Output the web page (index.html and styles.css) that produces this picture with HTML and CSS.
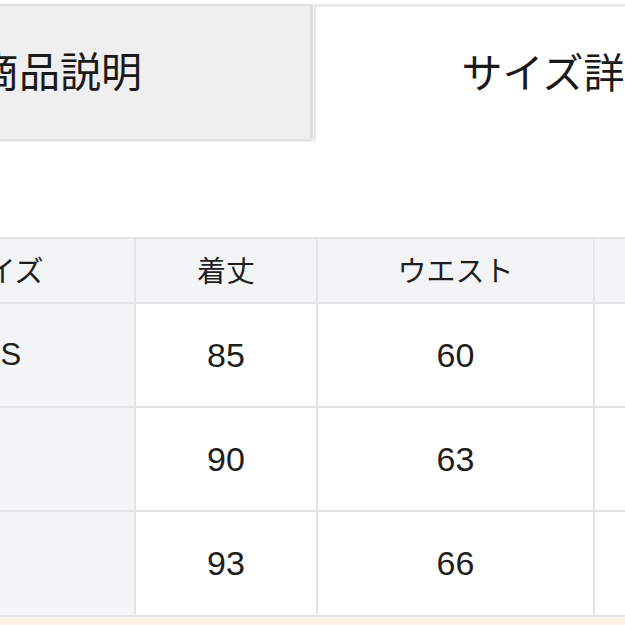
FILE: index.html
```html
<!DOCTYPE html>
<html lang="ja">
<head>
<meta charset="utf-8">
<title>サイズ詳細</title>
<link rel="stylesheet" href="styles.css">
</head>
<body>
<div class="page">
  <div class="tabs">
    <div class="tab tab-inactive">商品説明</div>
    <div class="tab tab-active">サイズ詳細</div>
  </div>
  <table class="size-table">
    <colgroup>
      <col class="c1"><col class="c2"><col class="c3"><col class="c4"><col class="c5">
    </colgroup>
    <thead>
      <tr class="head-row">
        <th>サイズ</th><th>着丈</th><th>ウエスト</th><th>ヒップ</th><th>裾幅</th>
      </tr>
    </thead>
    <tbody>
      <tr class="r1"><th class="label">XS</th><td>85</td><td>60</td><td>88</td><td>70</td></tr>
      <tr class="r2"><th class="label"></th><td>90</td><td>63</td><td>92</td><td>72</td></tr>
      <tr class="r3"><th class="label"></th><td>93</td><td>66</td><td>96</td><td>74</td></tr>
      <tr class="note-row"><td colspan="5"></td></tr>
    </tbody>
  </table>
</div>
</body>
</html>
```

FILE: styles.css
```css
html, body {
  margin: 0;
  padding: 0;
  background: #ffffff;
  overflow: hidden;
}

.page {
  width: 625px;
  height: 625px;
  overflow: hidden;
  font-family: "Liberation Sans", "Noto Sans CJK JP", sans-serif;
  color: #1e1e1e;
}

.tabs {
  display: flex;
  margin-left: -192px;
  padding-top: 4px;
}

.tab {
  box-sizing: border-box;
  width: 505px;
  height: 137px;
  flex: none;
  display: flex;
  align-items: center;
  justify-content: center;
  padding-bottom: 8px;
  font-size: 41px;
  font-family: "Noto Sans CJK JP", sans-serif;
  font-weight: 400;
  color: #1a1a1a;
}

.tab-inactive {
  background: #efefef;
  border: 2px solid #e0e0e0;
  border-right: 3px solid #dcdcdc;
  border-radius: 0 0 3px 0;
  box-shadow: 1px 1px 0 #f3f3f3;
}

.tab-active {
  background: #ffffff;
  border-top: 3px solid #ebebeb;
  border-left: 2px solid #e6e6e6;
  margin-left: 1px;
  padding-right: 8px;
}

.size-table {
  margin-top: 96px;
  margin-left: -135px;
  border-collapse: collapse;
  table-layout: fixed;
  width: 1280px;
}

.c1 { width: 269px; }
.c2 { width: 182px; }
.c3 { width: 277px; }
.c4 { width: 277px; }
.c5 { width: 275px; }

.size-table th,
.size-table td {
  border: 2px solid #e4e4e6;
  padding: 0;
  text-align: center;
  vertical-align: middle;
  font-weight: 400;
}

.head-row th {
  height: 60px;
  background: #f3f4f6;
  font-size: 29px;
  font-family: "Noto Sans CJK JP", sans-serif;
  padding-bottom: 3px;
}

.r1 td, .r1 th,
.r2 td, .r2 th {
  height: 102px;
}

.r3 td, .r3 th {
  height: 103px;
}

.size-table tbody td {
  font-size: 34px;
  background: #ffffff;
}

.size-table .label {
  background: #f4f5f7;
  font-size: 31px;
  font-family: "Liberation Sans", sans-serif;
}

.size-table .note-row td {
  height: 40px;
  background: #fbf3e5;
  border-color: #efe6d8;
}
```
